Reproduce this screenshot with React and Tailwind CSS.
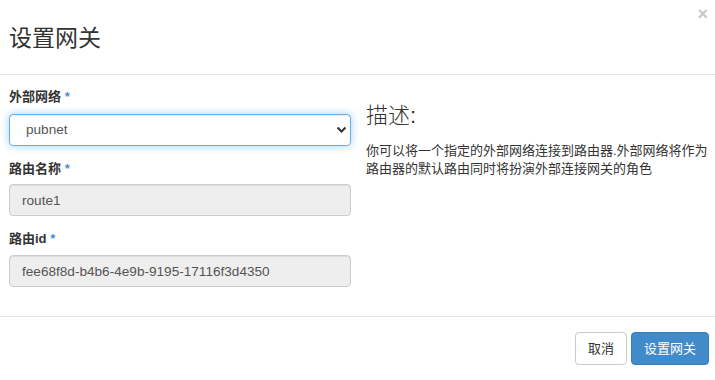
import { useState } from "react";

const font = { fontFamily: '"Liberation Sans", Arial, "Noto Sans CJK SC", sans-serif' };

export default function App() {
  const [network, setNetwork] = useState("pubnet");

  return (
    <div className="relative w-[715px] h-[380px] bg-white text-[#333]" style={font}>
      {/* Close */}
      <button className="absolute right-[7px] top-[5px] text-[18px] font-bold leading-[18px] text-[#c8c8c8]">
        ×
      </button>

      {/* Header */}
      <div className="h-[75px] flex items-center px-[9px] border-b border-[#e5e5e5]">
        <h4 className="text-[23px] leading-[24px] font-normal text-[#333] mt-[1px]">设置网关</h4>
      </div>

      {/* Body */}
      <div className="flex h-[242px] border-b border-[#e5e5e5]">
        <div className="w-[342px] ml-[9px] pt-[13px]">
          <label className="block text-[13px] font-bold leading-[18px] mb-[8px]">
            外部网络 <span className="text-[#4a90d9]">*</span>
          </label>
          <div className="relative">
            <select
              value={network}
              onChange={(e) => setNetwork(e.target.value)}
              className="appearance-none w-full h-[32px] pl-[16px] pr-[28px] text-[13.6px] text-[#555] bg-white border border-[#66afe9] rounded-[4px] shadow-[inset_0_1px_1px_rgba(0,0,0,0.075),0_0_8px_rgba(102,175,233,0.6)] outline-none"
            >
              <option value="pubnet">pubnet</option>
            </select>
            <svg
              className="absolute right-[4px] top-[12px] pointer-events-none"
              width="11"
              height="8"
              viewBox="0 0 11 8"
            >
              <path d="M1.5 1.5 L5.5 5.5 L9.5 1.5" stroke="#333" strokeWidth="2" fill="none" />
            </svg>
          </div>

          <label className="block text-[13px] font-bold leading-[18px] mt-[14px] mb-[6px]">
            路由名称 <span className="text-[#4a90d9]">*</span>
          </label>
          <input
            disabled
            value="route1"
            className="w-full h-[32px] px-[12px] text-[13.6px] text-[#555] bg-[#eee] border border-[#ccc] rounded-[4px] shadow-[inset_0_1px_1px_rgba(0,0,0,0.075)]"
          />

          <label className="block text-[13px] font-bold leading-[18px] mt-[14px] mb-[7px]">
            路由id <span className="text-[#4a90d9]">*</span>
          </label>
          <input
            disabled
            value="fee68f8d-b4b6-4e9b-9195-17116f3d4350"
            className="w-full h-[32px] px-[12px] text-[13.6px] text-[#555] bg-[#eee] border border-[#ccc] rounded-[4px] shadow-[inset_0_1px_1px_rgba(0,0,0,0.075)]"
          />
        </div>

        <div className="w-[345px] ml-[15px] pt-[29px]">
          <h3 className="text-[22px] leading-[24px] font-light text-[#333]">描述:</h3>
          <p className="mt-[14px] text-[13px] leading-[18px] text-[#333]">
            你可以将一个指定的外部网络连接到路由器.外部网络将作为路由器的默认路由同时将扮演外部连接网关的角色
          </p>
        </div>
      </div>

      {/* Footer */}
      <div className="flex justify-end gap-[4px] pt-[15px] pr-[6px]">
        <button className="h-[33px] px-[12px] text-[13px] text-[#333] bg-white border border-[#ccc] rounded-[4px]">
          取消
        </button>
        <button className="h-[33px] px-[12px] text-[13px] text-white bg-[#428bca] border border-[#357ebd] rounded-[4px]">
          设置网关
        </button>
      </div>
    </div>
  );
}
